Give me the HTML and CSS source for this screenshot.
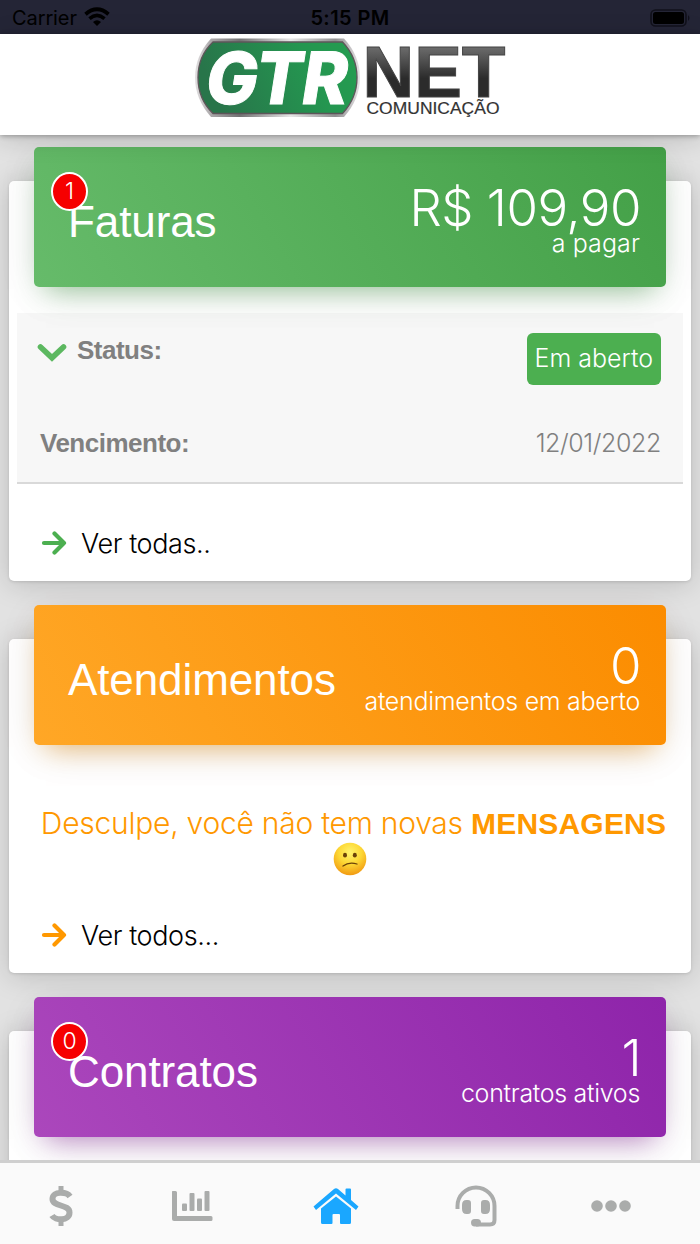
FILE: index.html
```html
<!DOCTYPE html>
<html lang="pt-BR">
<head>
    <meta charset="UTF-8">
    <meta name="viewport" content="width=device-width, initial-scale=1.0">
    <title>GTR Net</title>
    <link rel="stylesheet" href="styles.css">
</head>
<body>
    <div class="status-bar">
        <div class="carrier">
            <span>Carrier</span>
            <svg width="26" height="20" viewBox="0 0 26 20">
                <path d="M1.500 7.200Q13 -2.600 24.500 7.200" fill="none" stroke="#000" stroke-width="3.8"/>
                <path d="M5.500 11.600Q13 5.200 20.500 11.600" fill="none" stroke="#000" stroke-width="3.6"/>
                <path d="M9 15 Q13 11.600 17 15 L13 19 Z"/>
            </svg>
        </div>
        <div class="time">5:15 PM</div>
        <div class="battery">
            <svg width="41" height="18" viewBox="0 0 41 18">
                <rect x="1" y="1" width="35" height="16" rx="4.5" fill="none" stroke="#11111b" stroke-width="1.6"/>
                <rect x="3" y="3" width="31" height="12" rx="2.5"/>
                <path d="M38 6 Q41 9 38 12 Z" fill="#11111b"/>
            </svg>
        </div>
    </div>

    <header class="header">
        <svg class="logo" width="320" height="86" viewBox="190 34 320 86">
            <defs>
                <linearGradient id="green" x1="0" x2="1" y1="0.2" y2="0">
                    <stop offset="0" stop-color="#28754a"/>
                    <stop offset="0.65" stop-color="#249650"/>
                    <stop offset="1" stop-color="#249d50"/>
                </linearGradient>
                <linearGradient id="metal" x1="0" x2="1">
                    <stop offset="0" stop-color="#e2e0e1"/>
                    <stop offset="0.1" stop-color="#aaa7a9"/>
                    <stop offset="0.27" stop-color="#727273"/>
                    <stop offset="0.58" stop-color="#e6e6e6"/>
                    <stop offset="0.85" stop-color="#8f8f90"/>
                    <stop offset="1" stop-color="#e6e3e5"/>
                </linearGradient>
                <linearGradient id="dark" x1="0" x2="0" y1="0" y2="1">
                    <stop offset="0.2" stop-color="#6a6a6a"/>
                    <stop offset="0.58" stop-color="#2b2b2b"/>
                </linearGradient>
            </defs>
            <path d="M211 38.500H344Q360 56 360 77.500T344 117H211Q195 99 195 77.500T211 38.500Z" fill="url(#metal)"/>
            <path d="M213 42H342.500Q357 57 357 77.500T342.500 113.500H213Q198 99 198 77.500T213 42Z" fill="url(#green)" stroke="#5d5559" stroke-width="1.300"/>
            <text class="logo-gtr" transform="translate(203 104) skewX(-9)" textLength="142" lengthAdjust="spacingAndGlyphs">GTR</text>
            <text class="logo-net" x="362.500" y="97" textLength="143" lengthAdjust="spacingAndGlyphs">NET</text>
            <text class="logo-sub" x="366.500" y="113.500" textLength="133" lengthAdjust="spacingAndGlyphs">COMUNICAÇÃO</text>
        </svg>
    </header>

    <main class="content">
        <section class="card card-faturas">
            <div class="card-header green">
                <span class="badge">1</span>
                <h2>Faturas</h2>
                <div class="summary">
                    <div class="value">R$ 109,90</div>
                    <div class="caption">a pagar</div>
                </div>
            </div>
            <div class="invoice">
                <div class="row row-status">
                    <svg class="chevron" width="30" height="20" viewBox="0 0 30 20">
                        <path d="M3.500 4 L15 14.800 L26.500 4" fill="none" stroke="#5cb860" stroke-width="5.600" stroke-linecap="round"/>
                    </svg>
                    <b>Status:</b>
                    <span class="tag">Em aberto</span>
                </div>
                <div class="row row-date">
                    <b>Vencimento:</b>
                    <span class="date">12/01/2022</span>
                </div>
            </div>
            <a class="more">
                <svg width="26" height="24" viewBox="0 0 26 24">
                    <path d="M3 12 H23 M13.500 2.500 L23 12 L13.500 21.500" fill="none" stroke="#4caf50" stroke-width="4.200" stroke-linecap="round" stroke-linejoin="round"/>
                </svg>
                <span>Ver todas..</span>
            </a>
        </section>

        <section class="card card-atendimentos">
            <div class="card-header orange">
                <h2>Atendimentos</h2>
                <div class="summary">
                    <div class="value">0</div>
                    <div class="caption">atendimentos em aberto</div>
                </div>
            </div>
            <div class="message">
                <p><span>Desculpe, você não tem novas</span> <b>MENSAGENS</b></p>
                <svg class="emoji" width="34" height="34" viewBox="0 0 34 34">
                    <defs>
                        <radialGradient id="face" cx="0.5" cy="0.3" r="0.7">
                            <stop offset="0" stop-color="#fff36c"/>
                            <stop offset="0.5" stop-color="#fdd835"/>
                            <stop offset="1" stop-color="#f19a12"/>
                        </radialGradient>
                    </defs>
                    <circle cx="17" cy="17" r="16.300" fill="url(#face)"/>
                    <ellipse cx="12" cy="13.200" rx="2" ry="2.400" fill="#6b4208"/>
                    <ellipse cx="21.800" cy="13.200" rx="2" ry="2.400" fill="#6b4208"/>
                    <path d="M10 24 Q16 19.500 24 22" fill="none" stroke="#6b4208" stroke-width="1.300" stroke-linecap="round"/>
                </svg>
            </div>
            <a class="more">
                <svg width="26" height="24" viewBox="0 0 26 24">
                    <path d="M3 12 H23 M13.500 2.500 L23 12 L13.500 21.500" fill="none" stroke="#ff9800" stroke-width="4.200" stroke-linecap="round" stroke-linejoin="round"/>
                </svg>
                <span>Ver todos...</span>
            </a>
        </section>

        <section class="card card-contratos">
            <div class="card-header purple">
                <span class="badge">0</span>
                <h2>Contratos</h2>
                <div class="summary">
                    <div class="value">1</div>
                    <div class="caption">contratos ativos</div>
                </div>
            </div>
        </section>
    </main>

    <nav class="tab-bar">
        <a class="tab">
            <svg width="46" height="46" viewBox="0 0 46 46" fill="none" stroke="#aaacab">
                <path d="M23 3V10M23 36V43" stroke-width="5"/>
                <path d="M32 13.500C29 9 14.500 7.500 14.500 16C14.500 24 31.500 21 31.500 29.500C31.500 38.500 17 37.500 14 32.500" stroke-width="6"/>
            </svg>
        </a>
        <a class="tab">
            <svg width="46" height="46" viewBox="0 0 46 46" fill="#aaacab">
                <path d="M3.500 8H6.500Q8 8 8 9.500V33H42Q43.500 33 43.500 34.500V36.500Q43.500 38 42 38H5Q3 38 3 36V8.500Z"/>
                <rect x="13" y="20.500" width="5" height="7.500" rx="1"/>
                <rect x="20.500" y="10" width="5" height="18" rx="1"/>
                <rect x="28" y="15.500" width="5" height="12.500" rx="1"/>
                <rect x="35.500" y="8" width="5" height="20" rx="1"/>
            </svg>
        </a>
        <a class="tab">
            <svg width="46" height="46" viewBox="0 0 46 46" fill="#1aa7ff">
                <path d="M0.500 23.500L21 6Q23 4.500 25 6L32.500 12.500V6.500Q32.500 5.500 33.500 5.500H37Q38 5.500 38 6.500V17L45.500 23.500L43 27L23 10.500L3 27Z"/>
                <path d="M8 25.500L23 13.500L38 25.500V39.500Q38 41 36.500 41H28Q27 41 27 40V32Q27 31 26 31H20.500Q19.500 31 19.500 32V40Q19.500 41 18.500 41H9.500Q8 41 8 39.500Z"/>
            </svg>
        </a>
        <a class="tab">
            <svg width="46" height="46" viewBox="0 0 46 46" fill="#aaacab">
                <path d="M4.500 26V23A18.500 18.500 0 0 1 41.500 23V37Q41.500 41.500 37 41.500H23" fill="none" stroke="#aaacab" stroke-width="4"/>
                <path d="M15 17H13.500Q9 17 9 22V26Q9 31 13.500 31H15Q18 31 18 28V20Q18 17 15 17ZM31 17H32.500Q37 17 37 22V26Q37 31 32.500 31H31Q28 31 28 28V20Q28 17 31 17Z"/>
                <rect x="18" y="36" width="10" height="7.500" rx="3.700"/>
            </svg>
        </a>
        <a class="tab">
            <svg width="46" height="46" viewBox="0 0 46 46" fill="#aaacab">
                <circle cx="9" cy="23" r="5.800"/>
                <circle cx="23" cy="23" r="5.800"/>
                <circle cx="37" cy="23" r="5.800"/>
            </svg>
        </a>
    </nav>
</body>
</html>
```

FILE: styles.css
```css
* {
    box-sizing: border-box;
}

body {
    display: flex;
    flex-direction: column;
    height: 1244px;
    margin: 0;
    overflow: hidden;
    background-color: #e2e2e2;
    font-family: Inter, "Liberation Sans", sans-serif;
    font-weight: 260;
}

h2, p {
    margin: 0;
}

b {
    font-family: "Liberation Sans", Arial, sans-serif;
    font-weight: bold;
}

svg {
    display: block;
    flex: none;
}

/* Phone status bar */
.status-bar {
    display: grid;
    grid-template-columns: 1fr 1fr 1fr;
    align-items: center;
    flex: none;
    height: 34px;
    padding: 1px 9px 0 12px;
    background-color: #242536;
    color: #000;
    font-size: 20px;
    font-weight: 400;
}

.carrier {
    display: flex;
    align-items: center;
    gap: 7px;
    letter-spacing: -0.1px;
}

.carrier svg {
    margin-top: -2px;
}

.time {
    margin-left: -3px;
    text-align: center;
    font-weight: 600;
    letter-spacing: 0.4px;
}

.battery {
    justify-self: end;
}

.header {
    position: relative;
    z-index: 1;
    display: flex;
    justify-content: center;
    flex: none;
    height: 101px;
    background-color: #fff;
    box-shadow: 0 1px 5px rgba(0, 0, 0, 0.3), 0 4px 24px rgba(0, 0, 0, 0.16);
}

.logo {
    overflow: visible;
}

.logo-gtr {
    font: 800 72px Inter, "Liberation Sans", sans-serif;
    fill: #fff;
    stroke: #fff;
    stroke-width: 1px;
}

.logo-net {
    font: bold 72px "Liberation Sans", Arial, sans-serif;
    fill: url(#dark);
    stroke: #444;
    stroke-width: 1px;
}

.logo-sub {
    font: 17px "Liberation Sans", Arial, sans-serif;
    fill: #333;
    stroke: #333;
    stroke-width: 0.2px;
}

/* Cards */
.content {
    flex: 1;
    min-height: 0;
    padding: 46px 9px 0;
    overflow: hidden;
}

.card {
    margin-bottom: 58px;
    padding: 0 8px;
    background-color: #fff;
    border-radius: 5px;
    box-shadow: 0 3px 28px rgba(0, 0, 0, 0.17), 0 1px 3px rgba(0, 0, 0, 0.12);
}

.card-faturas {
    height: 400px;
}

.card-atendimentos {
    height: 334px;
}

.card-contratos {
    height: 400px;
}

.card-header {
    position: relative;
    top: -34px;
    display: flex;
    justify-content: space-between;
    height: 140px;
    margin: 0 17px -8px;
    padding: 34px 26px 0 34px;
    border-radius: 5px;
    color: #fff;
}

.green {
    background: linear-gradient(60deg, #66bb6a, #43a047);
    box-shadow: 0 8px 40px -8px rgba(0, 0, 0, 0.16), 0 14px 26px -12px rgba(76, 175, 80, 0.5);
}

.orange {
    background: linear-gradient(60deg, #ffa726, #fb8c00);
    box-shadow: 0 8px 40px -8px rgba(0, 0, 0, 0.16), 0 14px 26px -12px rgba(255, 152, 0, 0.5);
}

.purple {
    background: linear-gradient(60deg, #ab47bc, #8e24aa);
    box-shadow: 0 8px 40px -8px rgba(0, 0, 0, 0.16), 0 14px 26px -12px rgba(156, 39, 176, 0.5);
}

.card-header h2 {
    padding-top: 15px;
    font: 44px/52px "Liberation Sans", Arial, sans-serif;
    letter-spacing: -0.1px;
}

.summary {
    text-align: right;
}

.value {
    margin-right: -1px;
    font-size: 51px;
    line-height: 54px;
    letter-spacing: -0.5px;
}

.caption {
    margin-top: -2px;
    font-size: 25px;
    line-height: 20px;
    letter-spacing: -0.3px;
}

.card-faturas .caption {
    letter-spacing: 0.1px;
}

.badge {
    position: absolute;
    top: 25px;
    left: 17px;
    width: 37px;
    height: 39px;
    border: 2px solid #fff;
    border-radius: 50%;
    background-color: #f60000;
    font-size: 23px;
    line-height: 35px;
    text-align: center;
}

/* Invoice details */
.invoice {
    height: 171px;
    padding: 20px 22px 0 20px;
    border-bottom: 2px solid #d9d9d9;
    background-color: #f7f7f7;
    color: #808080;
    font-size: 25px;
}

.row {
    display: flex;
    align-items: flex-start;
}

.row b {
    flex: 1;
    font-size: 26px;
    line-height: 34px;
    letter-spacing: -0.5px;
}

.row-status {
    height: 93px;
}

.chevron {
    margin: 10px 10px 0 0;
}

.tag {
    height: 52px;
    padding: 0 8px;
    border-radius: 6px;
    background-color: #4caf50;
    color: #fff;
    line-height: 51px;
}

.row-date {
    padding-left: 3px;
}

.date {
    letter-spacing: -0.4px;
    line-height: 34px;
}

.more {
    display: flex;
    align-items: center;
    gap: 14px;
    height: 40px;
    margin: 39px 0 0 24px;
    color: #000;
    font-size: 27px;
    letter-spacing: -0.4px;
}

.message {
    display: flex;
    flex-direction: column;
    align-items: center;
    padding: 34px 16px 0 23px;
    color: #ff9800;
    font-size: 30px;
    line-height: 36px;
    letter-spacing: -0.25px;
}

.message p {
    white-space: nowrap;
}

.message b {
    letter-spacing: 0.2px;
}

.emoji {
    margin: 0 7px 0 0;
}

/* Bottom navigation */
.tab-bar {
    position: relative;
    display: flex;
    justify-content: space-between;
    flex: none;
    height: 84px;
    padding: 20px 66px 0 38px;
    border-top: 3px solid #cfcfcf;
    background-color: #fafafa;
}

.tab:nth-child(2) {
    margin: 0 3px 0 -4px;
}

.tab:nth-child(3) {
    margin: 0 6px;
}
```
